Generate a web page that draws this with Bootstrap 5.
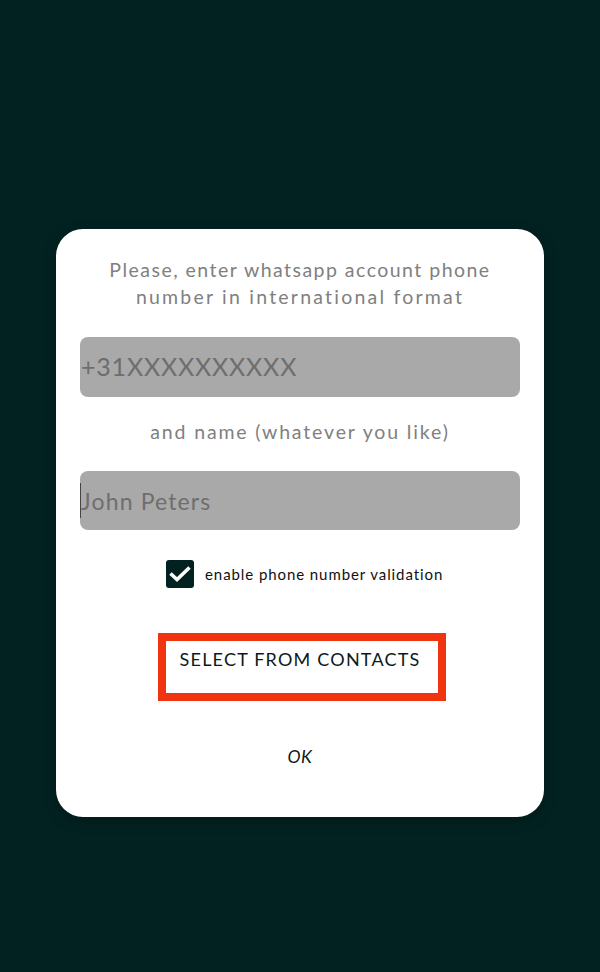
<!DOCTYPE html>
<html lang="en">
<head>
<meta charset="utf-8">
<title>Add number</title>
<link href="https://cdn.jsdelivr.net/npm/bootstrap@5.3.0/dist/css/bootstrap.min.css" rel="stylesheet">
<style>
html,body{height:100%}
body{background:#022221;font-family:"Lato","Liberation Sans",sans-serif;padding:229px 56px 0}
.dlg{background:#fff;border-radius:27px;height:588px;padding:27px 24px 0;box-shadow:0 4px 14px rgba(0,0,0,.25)}
.dlg-title{color:#808080;font-size:19.5px;line-height:27px;letter-spacing:1.47px;height:81px;margin:0}
.title-second{letter-spacing:2.22px}
.dlg-input{display:block;width:100%;height:60px;background:#a9a9a9;border:0;border-radius:8px;padding:0 0 2px 1px;font-size:25px;letter-spacing:.8px;color:#555}
.dlg-input:focus{background:#a9a9a9;box-shadow:none}
.dlg-input::placeholder{color:#6e6e6e;opacity:1}
.name-wrap{position:relative}
.name-wrap::before{content:"";position:absolute;left:0;top:12px;width:1px;height:35px;background:#444}
.name-input{letter-spacing:1.15px;font-size:23px;height:59px;padding-bottom:0}
.dlg-sub{color:#808080;font-size:19.5px;line-height:27px;letter-spacing:1.85px;height:74px;padding-top:21px;margin:0}
.chk-row{height:56px;margin-top:16px;padding-left:86px;gap:11px}
.chk-box{width:28px;height:28px;background:#022221;border-radius:3px;flex:none}
.chk-label{color:#111;font-size:15px;letter-spacing:.92px;white-space:nowrap}
.pick-btn{display:block;width:288px;height:68px;margin:31px 0 0 78px;padding:8px 4px 24px 0;background:#fff;border:8px solid #f0340f;border-radius:0;color:#0b1a1a;font-size:18px;letter-spacing:1.2px;line-height:20px;text-align:center;white-space:nowrap}
.pick-btn:hover,.pick-btn:active{background:#fff;border-color:#f0340f;color:#0b1a1a}
.ok-btn{display:block;margin:44px auto 0;padding:0;border:0;background:none;color:#0b1a1a;font-size:17.5px;line-height:24px;font-style:italic;letter-spacing:.5px}
</style>
</head>
<body>
<main class="dlg">
  <p class="dlg-title text-center">Please, enter whatsapp account phone<br><span class="title-second">number in international format</span></p>
  <input class="form-control dlg-input" type="text" placeholder="+31XXXXXXXXXX" aria-label="Phone number">
  <p class="dlg-sub text-center">and name (whatever you like)</p>
  <div class="name-wrap"><input class="form-control dlg-input name-input" type="text" placeholder="John Peters" aria-label="Name"></div>
  <div class="chk-row d-flex align-items-center">
    <span class="chk-box d-flex align-items-center justify-content-center">
      <svg width="22" height="16" viewBox="0 0 22 16" aria-hidden="true"><path d="M1.5 7.5 8 13.5 20.5 1.5" fill="none" stroke="#fff" stroke-width="3.6"/></svg>
    </span>
    <span class="chk-label">enable phone number validation</span>
  </div>
  <button type="button" class="btn pick-btn">SELECT FROM CONTACTS</button>
  <button type="button" class="btn ok-btn">OK</button>
</main>
<script src="https://cdn.jsdelivr.net/npm/bootstrap@5.3.0/dist/js/bootstrap.bundle.min.js"></script>
</body>
</html>
